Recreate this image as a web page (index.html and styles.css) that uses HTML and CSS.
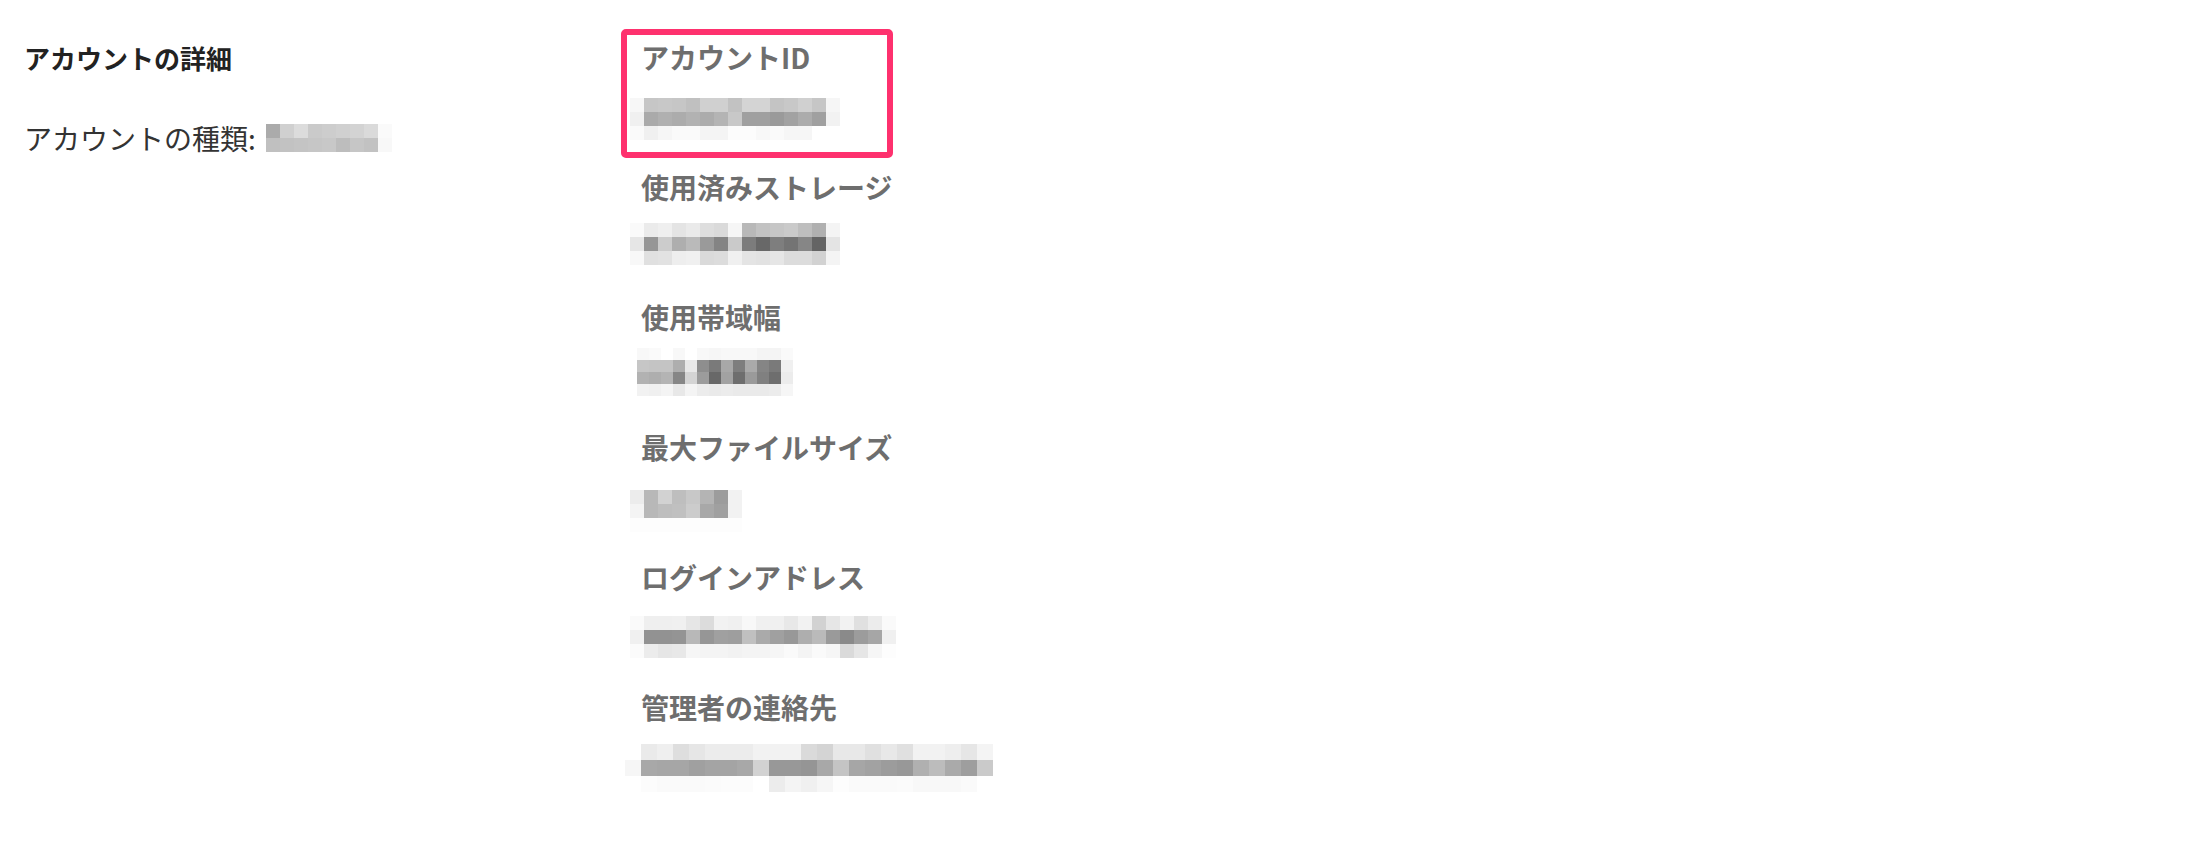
FILE: index.html
```html
<!DOCTYPE html>
<html lang="ja">
<head>
  <meta charset="UTF-8" />
  <meta name="viewport" content="width=device-width, initial-scale=1" />
  <title>アカウントの詳細</title>
  <link rel="stylesheet" href="styles.css">
</head>
<body>
  <div class="page">
    <section class="summary">
      <h2 class="summary-title">アカウントの詳細</h2>
      <p class="summary-type">アカウントの種類:<span class="mosaic" data-key="type"></span></p>
    </section>

    <dl class="details">
      <div class="detail is-marked">
        <dt>アカウントID</dt>
        <dd><span class="mosaic" data-key="id"></span></dd>
      </div>
      <div class="detail">
        <dt>使用済みストレージ</dt>
        <dd><span class="mosaic" data-key="storage"></span></dd>
      </div>
      <div class="detail">
        <dt>使用帯域幅</dt>
        <dd><span class="mosaic" data-key="bandwidth"></span></dd>
      </div>
      <div class="detail">
        <dt>最大ファイルサイズ</dt>
        <dd><span class="mosaic" data-key="maxsize"></span></dd>
      </div>
      <div class="detail">
        <dt>ログインアドレス</dt>
        <dd><span class="mosaic" data-key="login"></span></dd>
      </div>
      <div class="detail">
        <dt>管理者の連絡先</dt>
        <dd><span class="mosaic" data-key="contact"></span></dd>
      </div>
    </dl>
  </div>

  <script>
    // hidden values, drawn as pixel mosaics (grey levels per cell)
    const mosaics = {
      type: { cell: 14, x: 0, y: 0, rows: [
        "ab d0 dc ca cd d0 d3 da fa",
        "c0 c2 c4 c6 c8 bd c6 c2 f8"
      ]},
      id: { cell: 14, x: -11, y: 21, rows: [
        "f7 c6 c8 c6 c0 d0 d0 c2 d4 d4 c4 c8 d0 c6 f6",
        "f0 aa b0 ac b2 ac b4 c8 a0 a0 9a a2 ac a0 f2",
        "fa f0 f6 fa fa f4 f4 fc fc f8 fa f6 f6 ff ff"
      ]},
      storage: { cell: 14, x: -11, y: 16, rows: [
        "fa eb ef e4 ea de da f6 b8 c2 c6 ca be b0 f4",
        "e6 96 cc ae ba 9a 84 ca 7c 68 7e 74 86 64 e4",
        "f8 e0 e2 ee f0 da dc f0 e4 e2 e6 dc dc d2 f4"
      ]},
      bandwidth: { cell: 12, x: -4, y: 11, rows: [
        "f8 fa ff f8 ff f8 f6 f8 f8 f8 f4 f4 fa",
        "c6 c4 c4 ae e8 8e 7a a8 7e aa 85 7a f0",
        "b2 ae b4 86 d4 9c 68 a2 6e 9a 80 6e ec",
        "f2 f0 f4 e8 f4 ec ea ec ea ea ea ec f6"
      ]},
      maxsize: { cell: 14, x: -11, y: 23, rows: [
        "ec b8 d2 be c8 b4 9c f2",
        "f4 b8 be c0 cc a8 a0 f2",
        "fd fd fd fd fd fd fd fd"
      ]},
      login: { cell: 14, x: -11, y: 19, rows: [
        "fa ef ef f0 e6 dc f2 f0 f8 f0 f0 e8 f2 d2 e6 f2 e0 ec fa",
        "f0 92 92 94 b8 96 a0 9e c0 aa a0 98 ae ba 9a 8a 9c a6 f0",
        "fb ec e6 e8 f6 f4 f4 f2 f4 f4 f6 fa f4 fa f6 da e6 f6 fd"
      ]},
      contact: { cell: 16, x: -16, y: 17, rows: [
        "ff ea ef de e6 ec ec ec f2 f2 f2 da d4 e8 e8 e0 e8 e0 f2 f2 ee e6 f4",
        "f6 a8 a6 a6 a0 a4 a4 a8 d2 98 98 95 a8 c4 a6 a2 9c 98 b0 bc aa 9e ca",
        "ff fc fa fa fa fb fc fc ff ec f4 f0 f6 fd fa fa fa fb f8 f8 f8 fa ff"
      ]}
    };

    document.querySelectorAll(".mosaic").forEach(function (el) {
      const m = mosaics[el.dataset.key];
      const cols = m.rows[0].split(" ").length;
      el.style.gridTemplateColumns = "repeat(" + cols + ", " + m.cell + "px)";
      el.style.gridAutoRows = m.cell + "px";
      el.style.marginLeft = m.x + "px";
      el.style.marginTop = m.y + "px";
      m.rows.forEach(function (row) {
        row.split(" ").forEach(function (g) {
          const cell = document.createElement("span");
          cell.style.background = "#" + g + g + g;
          el.appendChild(cell);
        });
      });
    });
  </script>
</body>
</html>
```

FILE: styles.css
```css
body {
  margin: 0;
  background-color: #ffffff;
  font-family: "Noto Sans CJK JP", "Noto Sans", sans-serif;
}
.page {
  display: flex;
  align-items: flex-start;
}
.summary {
  width: 617px;
  padding-left: 24px;
  padding-top: 38px;
}
.summary-title {
  margin: 0;
  font-size: 26px;
  line-height: 40px;
  font-weight: 700;
  color: #222222;
}
.summary-type {
  margin: 40px 0 0;
  display: flex;
  align-items: center;
  font-size: 28px;
  line-height: 40px;
  color: #333333;
}
.summary-type .mosaic {
  margin-left: 10px !important;
}
.details {
  margin: 0;
  padding-top: 37px;
}
.detail {
  position: relative;
  height: 130px;
}
.detail dt {
  font-size: 28px;
  line-height: 40px;
  font-weight: 700;
  color: #6e6e6e;
}
.detail dd {
  margin: 0;
}
.detail.is-marked::after {
  content: '';
  position: absolute;
  left: -20px;
  top: -8px;
  width: 272px;
  height: 129px;
  box-sizing: border-box;
  border: 6px solid #fe316e;
  border-radius: 5px;
}
.mosaic {
  display: grid;
}
.mosaic span {
  display: block;
}
```
